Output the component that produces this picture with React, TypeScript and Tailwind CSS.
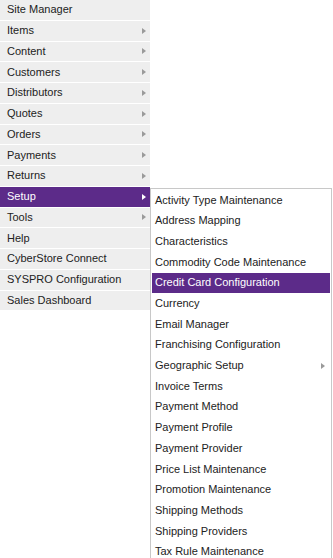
const mainItems: { label: string; sub?: boolean; active?: boolean }[] = [
  { label: "Site Manager" },
  { label: "Items", sub: true },
  { label: "Content", sub: true },
  { label: "Customers", sub: true },
  { label: "Distributors", sub: true },
  { label: "Quotes", sub: true },
  { label: "Orders", sub: true },
  { label: "Payments", sub: true },
  { label: "Returns", sub: true },
  { label: "Setup", sub: true, active: true },
  { label: "Tools", sub: true },
  { label: "Help" },
  { label: "CyberStore Connect" },
  { label: "SYSPRO Configuration" },
  { label: "Sales Dashboard" },
];

const setupItems: { label: string; sub?: boolean; active?: boolean }[] = [
  { label: "Activity Type Maintenance" },
  { label: "Address Mapping" },
  { label: "Characteristics" },
  { label: "Commodity Code Maintenance" },
  { label: "Credit Card Configuration", active: true },
  { label: "Currency" },
  { label: "Email Manager" },
  { label: "Franchising Configuration" },
  { label: "Geographic Setup", sub: true },
  { label: "Invoice Terms" },
  { label: "Payment Method" },
  { label: "Payment Profile" },
  { label: "Payment Provider" },
  { label: "Price List Maintenance" },
  { label: "Promotion Maintenance" },
  { label: "Shipping Methods" },
  { label: "Shipping Providers" },
  { label: "Tax Rule Maintenance" },
];

function Arrow({ white }: { white?: boolean }) {
  return (
    <span
      className={`w-0 h-0 border-y-[3px] border-y-transparent border-l-[4px] ${
        white ? "border-l-white" : "border-l-[#9a9a9a]"
      }`}
    />
  );
}

function SetupMenu() {
  return (
    <div className="absolute left-[150px] top-[1px] w-[182px] bg-white border border-[#c8c8c8] p-[1px] z-10">
      {setupItems.map((it) => (
        <div
          key={it.label}
          className={`h-[20.7px] flex items-center justify-between pl-[3px] pr-[5px] ${
            it.active ? "bg-[#5c2b89] text-white" : "text-[#222]"
          }`}
        >
          <span>{it.label}</span>
          {it.sub && <Arrow />}
        </div>
      ))}
    </div>
  );
}

export default function App() {
  return (
    <div className="w-[333px] h-[558px] overflow-hidden bg-white font-['Liberation_Sans',Arial,sans-serif] text-[11px] leading-none">
      <div className="w-[150px] bg-[#eeeeee]">
        {mainItems.map((it) => (
          <div
            key={it.label}
            className={`relative h-[20.75px] border-b border-white flex items-center justify-between pl-[7px] pr-[4px] ${
              it.active ? "bg-[#5c2b89] text-white" : "text-[#222]"
            }`}
          >
            <span>{it.label}</span>
            {it.sub && <Arrow white={it.active} />}
            {it.active && <SetupMenu />}
          </div>
        ))}
      </div>
    </div>
  );
}
